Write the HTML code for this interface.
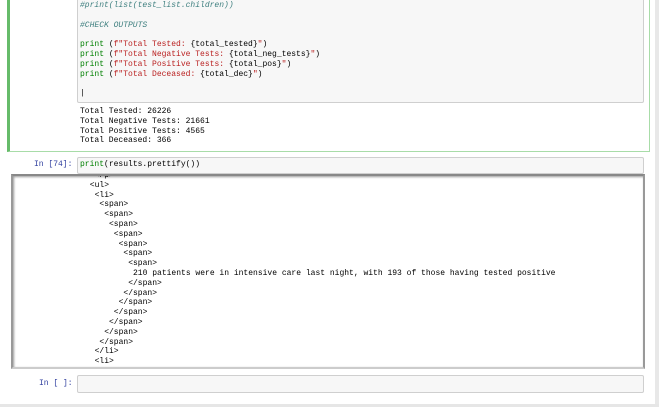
<!DOCTYPE html>
<html><head><style>
body{margin:0;width:659px;height:407px;overflow:hidden;background:#fff;position:relative;font-family:"Liberation Mono",monospace;font-size:8px;}
.a{position:absolute;}
pre{margin:0;font-family:"Liberation Mono",monospace;font-size:8px;line-height:9.8px;color:#000;}
.g{color:#008000}.r{color:#ba2121}.c{color:#408080;font-style:italic}
.p{color:#303f9f}
.box{background:#f7f7f7;border:1px solid #cfcfcf;border-radius:2px;}
</style></head><body>
<div class="a" style="left:7px;top:-2px;width:639px;height:153px;border:1px solid #a8dca8;border-left:3px solid #66bb6a;border-top:none;"></div>
<div class="a" style="left:655px;top:0;width:4px;height:407px;background:#e8e8e8;"></div>
<div class="a box" style="left:77px;top:-2px;width:565px;height:103px;"></div>
<pre class="a" style="left:80px;top:1px;"><span class="c">#print(list(test_list.children))</span>

<span class="c">#CHECK OUTPUTS</span>

<span class="g">print</span> (<span class="r">f"Total Tested: </span>{total_tested}<span class="r">"</span>)
<span class="g">print</span> (<span class="r">f"Total Negative Tests: </span>{total_neg_tests}<span class="r">"</span>)
<span class="g">print</span> (<span class="r">f"Total Positive Tests: </span>{total_pos}<span class="r">"</span>)
<span class="g">print</span> (<span class="r">f"Total Deceased: </span>{total_dec}<span class="r">"</span>)

|</pre>
<pre class="a" style="left:80px;top:107px;">Total Tested: 26226
Total Negative Tests: 21661
Total Positive Tests: 4565
Total Deceased: 366</pre>
<pre class="a p" style="left:34px;top:160px;">In [74]:</pre>
<div class="a box" style="left:77px;top:157px;width:565px;height:15px;"></div>
<pre class="a" style="left:80px;top:160px;"><span class="g">print</span>(results.prettify())</pre>
<div class="a" style="left:11px;top:174px;width:630px;height:191px;border:1px solid #aaa;border-width:2px 2px 2px 2px;border-color:#888 #999 #ccc #999;box-shadow:inset 1px 1px 2px #999;overflow:hidden;">
<pre style="position:absolute;left:72px;top:-5px;">  &lt;/p&gt;
 &lt;ul&gt;
  &lt;li&gt;
   &lt;span&gt;
    &lt;span&gt;
     &lt;span&gt;
      &lt;span&gt;
       &lt;span&gt;
        &lt;span&gt;
         &lt;span&gt;
          210 patients were in intensive care last night, with 193 of those having tested positive
         &lt;/span&gt;
        &lt;/span&gt;
       &lt;/span&gt;
      &lt;/span&gt;
     &lt;/span&gt;
    &lt;/span&gt;
   &lt;/span&gt;
  &lt;/li&gt;
  &lt;li&gt;</pre></div>
<pre class="a p" style="left:39px;top:379px;">In [ ]:</pre>
<div class="a box" style="left:77px;top:375px;width:565px;height:16px;"></div>
<div class="a" style="left:0;top:404px;width:659px;height:3px;background:#e6e6e6;"></div>
</body></html>
